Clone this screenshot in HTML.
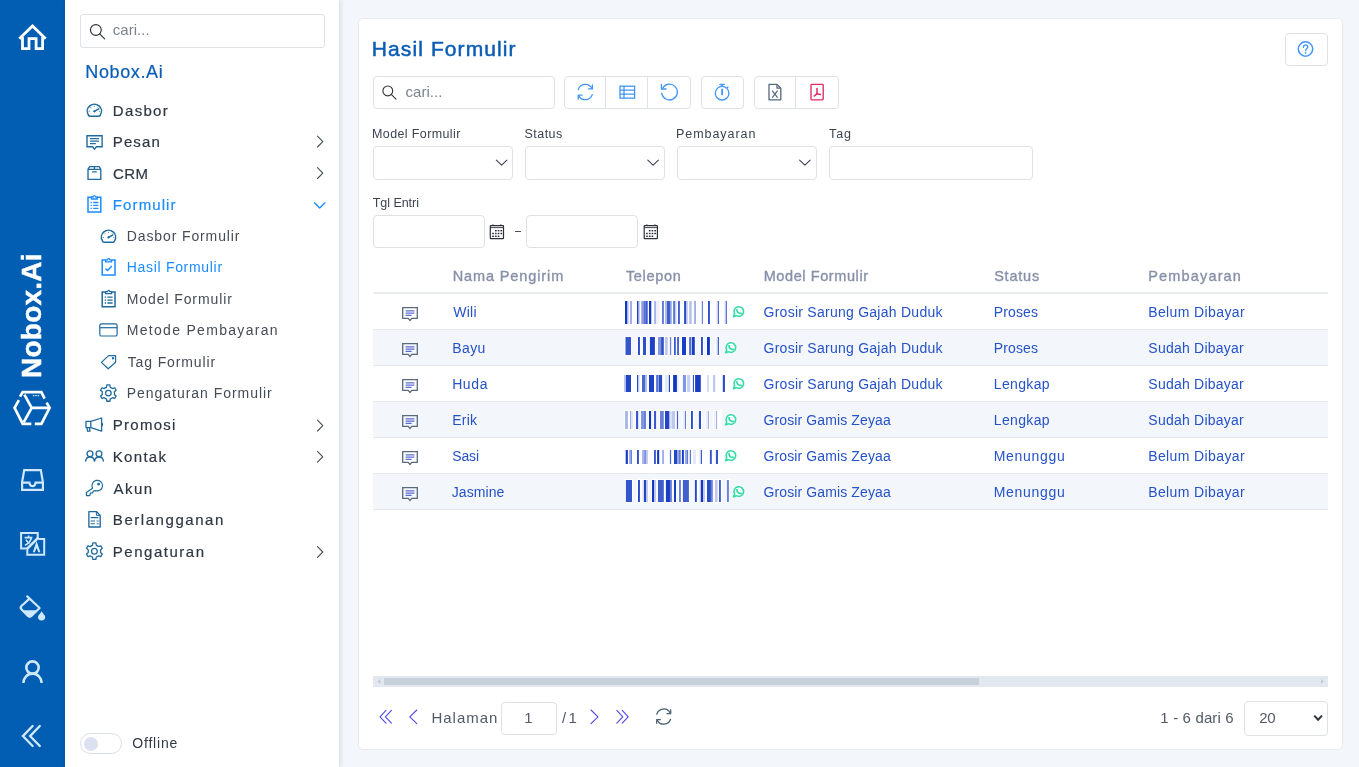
<!DOCTYPE html>
<html lang="id"><head><meta charset="utf-8"><title>Hasil Formulir</title>
<style>
html,body{margin:0;padding:0}
body{width:1359px;height:767px;overflow:hidden;position:relative;background:#f3f6fa;font-family:"Liberation Sans",sans-serif}
.t{position:absolute;white-space:nowrap;display:block}
.abs{position:absolute;box-sizing:border-box}
#rail{left:0;top:0;width:65px;height:767px;background:#015eb2}
#side{left:65px;top:0;width:274px;height:767px;background:#fff;box-shadow:1px 0 5px rgba(40,50,70,.16)}
#card{left:358px;top:18px;width:985px;height:732px;background:#fff;border:1px solid #e6eaef;border-radius:5px}
.box{background:#fff;border:1px solid #dee1e5;border-radius:4px}
.vt{position:absolute;white-space:nowrap;color:#fff;font-weight:bold;transform-origin:0 0;transform:rotate(-90deg)}
.rowbg{left:373px;width:955px;height:35px;background:#f3f6fa}
.hl{left:373px;width:955px;height:1px;background:#e4e8ed}
svg{position:absolute;left:0;top:0}
</style></head><body>
<div class="abs" id="rail"></div>
<div class="abs" id="side"></div>
<div class="abs" id="card"></div>
<!-- sidebar search -->
<div class="abs box" style="left:80px;top:14px;width:245px;height:34px;border-radius:3px"></div>
<!-- toggle -->
<div class="abs" style="left:80px;top:733px;width:42px;height:21px;border:1.5px solid #d9dfe8;border-radius:11px;background:#fff"></div>
<div class="abs" style="left:84px;top:737px;width:14px;height:14px;border-radius:7px;background:#dbe1ee"></div>
<!-- vertical brand -->
<span class="vt" id="vt" style="will-change:transform;-webkit-text-stroke:.4px #fff;left:17.6px;top:378px;font-size:28px;line-height:28px;letter-spacing:0.246px">Nobox.Ai</span>
<!-- main: search + buttons -->
<div class="abs box" style="left:373px;top:76px;width:182px;height:33px"></div>
<div class="abs box" style="left:564px;top:76px;width:127px;height:33px"></div>
<div class="abs" style="left:605px;top:77px;width:1px;height:31px;background:#dee1e5"></div>
<div class="abs" style="left:647px;top:77px;width:1px;height:31px;background:#dee1e5"></div>
<div class="abs box" style="left:701px;top:76px;width:43px;height:33px"></div>
<div class="abs box" style="left:754px;top:76px;width:85px;height:33px"></div>
<div class="abs" style="left:795px;top:77px;width:1px;height:31px;background:#dee1e5"></div>
<div class="abs box" style="left:1285px;top:33px;width:43px;height:33px"></div>
<!-- filters -->
<div class="abs box" style="left:373px;top:146px;width:140px;height:34px"></div>
<div class="abs box" style="left:525px;top:146px;width:140px;height:34px"></div>
<div class="abs box" style="left:677px;top:146px;width:140px;height:34px"></div>
<div class="abs box" style="left:829px;top:146px;width:204px;height:34px"></div>
<div class="abs box" style="left:373px;top:215px;width:112px;height:33px"></div>
<div class="abs box" style="left:526px;top:215px;width:112px;height:33px"></div>
<div class="abs" style="left:515px;top:230.6px;width:5.6px;height:1.3px;background:#4a5058"></div>
<!-- table -->
<div class="abs" style="left:373px;top:292px;width:955px;height:2px;background:#e8ecf1"></div>
<div class="abs rowbg" style="top:330px"></div>
<div class="abs rowbg" style="top:402px"></div>
<div class="abs rowbg" style="top:474px"></div>
<div class="abs hl" style="top:329px"></div>
<div class="abs hl" style="top:365px"></div>
<div class="abs hl" style="top:401px"></div>
<div class="abs hl" style="top:437px"></div>
<div class="abs hl" style="top:473px"></div>
<div class="abs hl" style="top:509px"></div>
<!-- scrollbar -->
<div class="abs" style="left:373px;top:676px;width:955px;height:11px;background:#e3e8f0"></div>
<div class="abs" style="left:384px;top:678px;width:595px;height:7px;background:#c8d0da"></div>
<!-- footer -->
<div class="abs box" style="left:501px;top:702px;width:56px;height:33px"></div>
<div class="abs box" style="left:1244px;top:701px;width:84px;height:35px"></div>
<div id="txt" style="position:absolute;left:0;top:0;width:1359px;height:767px;will-change:transform">
<span class="t" id="t0" style="left:112.75px;top:22px;font-size:15px;line-height:15px;color:#7b848c;letter-spacing:0.021px;">cari...</span>
<span class="t" id="t1" style="left:85.35px;top:63px;font-size:18px;line-height:18px;color:#0a5cb5;letter-spacing:0.622px;-webkit-text-stroke:0.22px #0a5cb5;">Nobox.Ai</span>
<span class="t" id="t2" style="left:112.84px;top:103px;font-size:15px;line-height:15px;color:#2f3742;letter-spacing:1.319px;-webkit-text-stroke:0.2px #2f3742;">Dasbor</span>
<span class="t" id="t3" style="left:112.84px;top:134px;font-size:15px;line-height:15px;color:#2f3742;letter-spacing:1.093px;-webkit-text-stroke:0.2px #2f3742;">Pesan</span>
<span class="t" id="t4" style="left:113.05px;top:166px;font-size:15px;line-height:15px;color:#2f3742;letter-spacing:0.354px;-webkit-text-stroke:0.2px #2f3742;">CRM</span>
<span class="t" id="t5" style="left:112.84px;top:197px;font-size:15px;line-height:15px;color:#1a8cff;letter-spacing:1.104px;-webkit-text-stroke:0.2px #1a8cff;">Formulir</span>
<span class="t" id="t6" style="left:126.75px;top:229px;font-size:14px;line-height:14px;color:#454c56;letter-spacing:0.884px;">Dasbor Formulir</span>
<span class="t" id="t7" style="left:126.75px;top:260px;font-size:14px;line-height:14px;color:#1a8cff;letter-spacing:0.689px;">Hasil Formulir</span>
<span class="t" id="t8" style="left:126.75px;top:292px;font-size:14px;line-height:14px;color:#454c56;letter-spacing:0.906px;">Model Formulir</span>
<span class="t" id="t9" style="left:126.75px;top:323px;font-size:14px;line-height:14px;color:#454c56;letter-spacing:1.306px;">Metode Pembayaran</span>
<span class="t" id="t10" style="left:127.64px;top:355px;font-size:14px;line-height:14px;color:#454c56;letter-spacing:0.888px;">Tag Formulir</span>
<span class="t" id="t11" style="left:126.75px;top:386px;font-size:14px;line-height:14px;color:#454c56;letter-spacing:0.963px;">Pengaturan Formulir</span>
<span class="t" id="t12" style="left:112.84px;top:417px;font-size:15px;line-height:15px;color:#2f3742;letter-spacing:1.254px;-webkit-text-stroke:0.2px #2f3742;">Promosi</span>
<span class="t" id="t13" style="left:112.84px;top:449px;font-size:15px;line-height:15px;color:#2f3742;letter-spacing:1.286px;-webkit-text-stroke:0.2px #2f3742;">Kontak</span>
<span class="t" id="t14" style="left:113.60px;top:481px;font-size:15px;line-height:15px;color:#2f3742;letter-spacing:1.425px;-webkit-text-stroke:0.2px #2f3742;">Akun</span>
<span class="t" id="t15" style="left:112.83px;top:512px;font-size:15px;line-height:15px;color:#2f3742;letter-spacing:1.554px;-webkit-text-stroke:0.2px #2f3742;">Berlangganan</span>
<span class="t" id="t16" style="left:112.84px;top:544px;font-size:15px;line-height:15px;color:#2f3742;letter-spacing:1.518px;-webkit-text-stroke:0.2px #2f3742;">Pengaturan</span>
<span class="t" id="t17" style="left:132.28px;top:736px;font-size:14px;line-height:14px;color:#333a45;letter-spacing:0.798px;">Offline</span>
<span class="t" id="t18" style="left:371.85px;top:38px;font-size:21px;line-height:21px;color:#0a5cb5;letter-spacing:1.090px;-webkit-text-stroke:0.5px #0a5cb5;">Hasil Formulir</span>
<span class="t" id="t19" style="left:405.44px;top:84px;font-size:15px;line-height:15px;color:#7b848c;letter-spacing:0.054px;">cari...</span>
<span class="t" id="t20" style="left:372.05px;top:128px;font-size:12.5px;line-height:13px;color:#3b4350;letter-spacing:0.381px;">Model Formulir</span>
<span class="t" id="t21" style="left:524.43px;top:128px;font-size:12.5px;line-height:13px;color:#3b4350;letter-spacing:0.487px;">Status</span>
<span class="t" id="t22" style="left:676.05px;top:128px;font-size:12.5px;line-height:13px;color:#3b4350;letter-spacing:0.936px;">Pembayaran</span>
<span class="t" id="t23" style="left:829.00px;top:128px;font-size:12.5px;line-height:13px;color:#3b4350;letter-spacing:0.945px;">Tag</span>
<span class="t" id="t24" style="left:372.73px;top:197px;font-size:12.5px;line-height:13px;color:#3b4350;letter-spacing:-0.043px;">Tgl Entri</span>
<span class="t" id="t25" style="left:452.68px;top:269px;font-size:14.5px;line-height:15px;color:#8790a8;letter-spacing:0.885px;-webkit-text-stroke:0.35px #8790a8;">Nama Pengirim</span>
<span class="t" id="t26" style="left:625.88px;top:269px;font-size:14.5px;line-height:15px;color:#8790a8;letter-spacing:0.711px;-webkit-text-stroke:0.35px #8790a8;">Telepon</span>
<span class="t" id="t27" style="left:763.68px;top:269px;font-size:14.5px;line-height:15px;color:#8790a8;letter-spacing:0.591px;-webkit-text-stroke:0.35px #8790a8;">Model Formulir</span>
<span class="t" id="t28" style="left:994.14px;top:269px;font-size:14.5px;line-height:15px;color:#8790a8;letter-spacing:0.798px;-webkit-text-stroke:0.35px #8790a8;">Status</span>
<span class="t" id="t29" style="left:1148.26px;top:269px;font-size:14.5px;line-height:15px;color:#8790a8;letter-spacing:1.161px;-webkit-text-stroke:0.35px #8790a8;">Pembayaran</span>
<span class="t" id="t30" style="left:453.28px;top:305px;font-size:14px;line-height:14px;color:#2552c8;letter-spacing:0.234px;">Wili</span>
<span class="t" id="t31" style="left:763.54px;top:305px;font-size:14px;line-height:14px;color:#2552c8;letter-spacing:0.258px;">Grosir Sarung Gajah Duduk</span>
<span class="t" id="t32" style="left:993.75px;top:305px;font-size:14px;line-height:14px;color:#2552c8;letter-spacing:0.132px;">Proses</span>
<span class="t" id="t33" style="left:1148.22px;top:305px;font-size:14px;line-height:14px;color:#2552c8;letter-spacing:0.388px;">Belum Dibayar</span>
<span class="t" id="t34" style="left:452.15px;top:341px;font-size:14px;line-height:14px;color:#2552c8;letter-spacing:0.451px;">Bayu</span>
<span class="t" id="t35" style="left:763.54px;top:341px;font-size:14px;line-height:14px;color:#2552c8;letter-spacing:0.258px;">Grosir Sarung Gajah Duduk</span>
<span class="t" id="t36" style="left:993.75px;top:341px;font-size:14px;line-height:14px;color:#2552c8;letter-spacing:0.132px;">Proses</span>
<span class="t" id="t37" style="left:1148.32px;top:341px;font-size:14px;line-height:14px;color:#2552c8;letter-spacing:0.230px;">Sudah Dibayar</span>
<span class="t" id="t38" style="left:452.15px;top:377px;font-size:14px;line-height:14px;color:#2552c8;letter-spacing:0.619px;">Huda</span>
<span class="t" id="t39" style="left:763.54px;top:377px;font-size:14px;line-height:14px;color:#2552c8;letter-spacing:0.258px;">Grosir Sarung Gajah Duduk</span>
<span class="t" id="t40" style="left:993.75px;top:377px;font-size:14px;line-height:14px;color:#2552c8;letter-spacing:0.360px;">Lengkap</span>
<span class="t" id="t41" style="left:1148.32px;top:377px;font-size:14px;line-height:14px;color:#2552c8;letter-spacing:0.230px;">Sudah Dibayar</span>
<span class="t" id="t42" style="left:452.15px;top:413px;font-size:14px;line-height:14px;color:#2552c8;letter-spacing:0.290px;">Erik</span>
<span class="t" id="t43" style="left:763.54px;top:413px;font-size:14px;line-height:14px;color:#2552c8;letter-spacing:0.114px;">Grosir Gamis Zeyaa</span>
<span class="t" id="t44" style="left:993.75px;top:413px;font-size:14px;line-height:14px;color:#2552c8;letter-spacing:0.360px;">Lengkap</span>
<span class="t" id="t45" style="left:1148.32px;top:413px;font-size:14px;line-height:14px;color:#2552c8;letter-spacing:0.230px;">Sudah Dibayar</span>
<span class="t" id="t46" style="left:452.32px;top:449px;font-size:14px;line-height:14px;color:#2552c8;letter-spacing:-0.168px;">Sasi</span>
<span class="t" id="t47" style="left:763.54px;top:449px;font-size:14px;line-height:14px;color:#2552c8;letter-spacing:0.114px;">Grosir Gamis Zeyaa</span>
<span class="t" id="t48" style="left:993.75px;top:449px;font-size:14px;line-height:14px;color:#2552c8;letter-spacing:0.709px;">Menunggu</span>
<span class="t" id="t49" style="left:1148.22px;top:449px;font-size:14px;line-height:14px;color:#2552c8;letter-spacing:0.388px;">Belum Dibayar</span>
<span class="t" id="t50" style="left:451.78px;top:485px;font-size:14px;line-height:14px;color:#2552c8;letter-spacing:0.081px;">Jasmine</span>
<span class="t" id="t51" style="left:763.54px;top:485px;font-size:14px;line-height:14px;color:#2552c8;letter-spacing:0.114px;">Grosir Gamis Zeyaa</span>
<span class="t" id="t52" style="left:993.75px;top:485px;font-size:14px;line-height:14px;color:#2552c8;letter-spacing:0.709px;">Menunggu</span>
<span class="t" id="t53" style="left:1148.22px;top:485px;font-size:14px;line-height:14px;color:#2552c8;letter-spacing:0.388px;">Belum Dibayar</span>
<span class="t" id="t54" style="left:431.42px;top:710px;font-size:15px;line-height:15px;color:#515a66;letter-spacing:0.999px;">Halaman</span>
<span class="t" id="t55" style="left:524.32px;top:710px;font-size:15px;line-height:15px;color:#515a66;letter-spacing:0.000px;">1</span>
<span class="t" id="t56" style="left:562.04px;top:710px;font-size:15px;line-height:15px;color:#515a66;letter-spacing:0.000px;">/</span>
<span class="t" id="t57" style="left:568.43px;top:710px;font-size:15px;line-height:15px;color:#515a66;letter-spacing:0.000px;">1</span>
<span class="t" id="t58" style="left:1160.34px;top:710px;font-size:15px;line-height:15px;color:#515a66;letter-spacing:0.147px;">1 - 6 dari 6</span>
<span class="t" id="t59" style="left:1259.13px;top:710px;font-size:15px;line-height:15px;color:#515a66;letter-spacing:-0.141px;">20</span>
</div>
<svg width="1359" height="767" viewBox="0 0 1359 767" fill="none">
<rect x="625.0" y="301" width="2.2" height="23" fill="#1238c2" fill-opacity="1.0"/>
<rect x="627.2" y="301" width="1.6" height="23" fill="#1238c2" fill-opacity="0.25"/>
<rect x="630.0" y="301" width="2.0" height="23" fill="#1238c2" fill-opacity="0.4"/>
<rect x="637.0" y="301" width="1.4" height="23" fill="#1238c2" fill-opacity="0.95"/>
<rect x="638.4" y="301" width="1.5" height="23" fill="#1238c2" fill-opacity="0.25"/>
<rect x="641.2" y="301" width="2.2" height="23" fill="#1238c2" fill-opacity="0.47"/>
<rect x="643.4" y="301" width="1.9" height="23" fill="#1238c2" fill-opacity="0.7"/>
<rect x="645.3" y="301" width="2.4" height="23" fill="#1238c2" fill-opacity="0.82"/>
<rect x="649.0" y="301" width="2.3" height="23" fill="#1238c2" fill-opacity="1.0"/>
<rect x="654.1" y="301" width="1.9" height="23" fill="#1238c2" fill-opacity="0.37"/>
<rect x="656.0" y="301" width="3.2" height="23" fill="#1238c2" fill-opacity="0.07"/>
<rect x="662.1" y="301" width="1.7" height="23" fill="#1238c2" fill-opacity="0.74"/>
<rect x="665.0" y="301" width="1.9" height="23" fill="#1238c2" fill-opacity="0.32"/>
<rect x="666.9" y="301" width="3.3" height="23" fill="#1238c2" fill-opacity="0.8"/>
<rect x="670.2" y="301" width="1.5" height="23" fill="#1238c2" fill-opacity="0.47"/>
<rect x="673.1" y="301" width="1.9" height="23" fill="#1238c2" fill-opacity="0.67"/>
<rect x="675.0" y="301" width="1.4" height="23" fill="#1238c2" fill-opacity="0.25"/>
<rect x="678.1" y="301" width="1.7" height="23" fill="#1238c2" fill-opacity="0.9"/>
<rect x="684.1" y="301" width="1.9" height="23" fill="#1238c2" fill-opacity="0.9"/>
<rect x="686.0" y="301" width="1.7" height="23" fill="#1238c2" fill-opacity="0.3"/>
<rect x="689.1" y="301" width="2.6" height="23" fill="#1238c2" fill-opacity="0.3"/>
<rect x="694.1" y="301" width="1.9" height="23" fill="#1238c2" fill-opacity="0.4"/>
<rect x="701.8" y="301" width="1.2" height="23" fill="#1238c2" fill-opacity="0.63"/>
<rect x="708.0" y="301" width="1.9" height="23" fill="#1238c2" fill-opacity="0.88"/>
<rect x="716.1" y="301" width="1.7" height="23" fill="#1238c2" fill-opacity="0.1"/>
<rect x="717.8" y="301" width="1.2" height="23" fill="#1238c2" fill-opacity="0.76"/>
<rect x="724.3" y="301" width="1.4" height="23" fill="#1238c2" fill-opacity="0.1"/>
<rect x="725.7" y="301" width="1.2" height="23" fill="#1238c2" fill-opacity="0.76"/>
<rect x="624.5" y="336" width="7.5" height="20" fill="#fff"/>
<rect x="637.0" y="336" width="3.9" height="20" fill="#fff"/>
<rect x="642.0" y="336" width="5.0" height="20" fill="#fff"/>
<rect x="648.9" y="336" width="7.0" height="20" fill="#fff"/>
<rect x="657.0" y="336" width="5.1" height="20" fill="#fff"/>
<rect x="660.1" y="336" width="4.7" height="20" fill="#fff"/>
<rect x="664.0" y="336" width="4.8" height="20" fill="#fff"/>
<rect x="668.9" y="336" width="3.3" height="20" fill="#fff"/>
<rect x="673.0" y="336" width="3.8" height="20" fill="#fff"/>
<rect x="676.1" y="336" width="3.9" height="20" fill="#fff"/>
<rect x="681.0" y="336" width="6.0" height="20" fill="#fff"/>
<rect x="688.1" y="336" width="4.2" height="20" fill="#fff"/>
<rect x="690.9" y="336" width="4.9" height="20" fill="#fff"/>
<rect x="700.0" y="336" width="3.9" height="20" fill="#fff"/>
<rect x="706.0" y="336" width="4.9" height="20" fill="#fff"/>
<rect x="715.1" y="336" width="3.7" height="20" fill="#fff"/>
<rect x="716.8" y="336" width="3.2" height="20" fill="#fff"/>
<rect x="625.5" y="337" width="5.5" height="18" fill="#1238c2" fill-opacity="0.85"/>
<rect x="638.0" y="337" width="1.9" height="18" fill="#1238c2" fill-opacity="0.93"/>
<rect x="643.0" y="337" width="3.0" height="18" fill="#1238c2" fill-opacity="0.88"/>
<rect x="649.9" y="337" width="5.0" height="18" fill="#1238c2" fill-opacity="0.95"/>
<rect x="658.0" y="337" width="3.1" height="18" fill="#1238c2" fill-opacity="0.53"/>
<rect x="661.1" y="337" width="2.7" height="18" fill="#1238c2" fill-opacity="0.88"/>
<rect x="665.0" y="337" width="2.8" height="18" fill="#1238c2" fill-opacity="0.28"/>
<rect x="669.9" y="337" width="1.3" height="18" fill="#1238c2" fill-opacity="0.63"/>
<rect x="674.0" y="337" width="1.8" height="18" fill="#1238c2" fill-opacity="0.83"/>
<rect x="677.1" y="337" width="1.9" height="18" fill="#1238c2" fill-opacity="0.79"/>
<rect x="682.0" y="337" width="4.0" height="18" fill="#1238c2" fill-opacity="0.97"/>
<rect x="689.1" y="337" width="2.2" height="18" fill="#1238c2" fill-opacity="0.74"/>
<rect x="691.9" y="337" width="2.9" height="18" fill="#1238c2" fill-opacity="0.97"/>
<rect x="701.0" y="337" width="1.9" height="18" fill="#1238c2" fill-opacity="0.9"/>
<rect x="707.0" y="337" width="2.9" height="18" fill="#1238c2" fill-opacity="1.0"/>
<rect x="716.1" y="337" width="1.7" height="18" fill="#1238c2" fill-opacity="0.13"/>
<rect x="717.8" y="337" width="1.2" height="18" fill="#1238c2" fill-opacity="0.8"/>
<rect x="624.0" y="375" width="1.9" height="17" fill="#1238c2" fill-opacity="0.28"/>
<rect x="625.9" y="375" width="5.1" height="17" fill="#1238c2" fill-opacity="0.93"/>
<rect x="637.0" y="375" width="1.2" height="17" fill="#1238c2" fill-opacity="0.93"/>
<rect x="638.2" y="375" width="1.7" height="17" fill="#1238c2" fill-opacity="0.12"/>
<rect x="642.0" y="375" width="3.1" height="17" fill="#1238c2" fill-opacity="0.76"/>
<rect x="645.1" y="375" width="1.9" height="17" fill="#1238c2" fill-opacity="0.32"/>
<rect x="649.0" y="375" width="5.0" height="17" fill="#1238c2" fill-opacity="0.95"/>
<rect x="656.1" y="375" width="1.9" height="17" fill="#1238c2" fill-opacity="0.7"/>
<rect x="658.0" y="375" width="1.0" height="17" fill="#1238c2" fill-opacity="0.48"/>
<rect x="659.0" y="375" width="3.1" height="17" fill="#1238c2" fill-opacity="0.9"/>
<rect x="665.0" y="375" width="2.8" height="17" fill="#1238c2" fill-opacity="0.12"/>
<rect x="668.8" y="375" width="1.2" height="17" fill="#1238c2" fill-opacity="0.93"/>
<rect x="673.1" y="375" width="3.8" height="17" fill="#1238c2" fill-opacity="1.0"/>
<rect x="676.9" y="375" width="1.9" height="17" fill="#1238c2" fill-opacity="0.08"/>
<rect x="682.9" y="375" width="3.1" height="17" fill="#1238c2" fill-opacity="0.53"/>
<rect x="687.0" y="375" width="3.3" height="17" fill="#1238c2" fill-opacity="0.23"/>
<rect x="692.9" y="375" width="1.0" height="17" fill="#1238c2" fill-opacity="0.97"/>
<rect x="695.1" y="375" width="5.7" height="17" fill="#1238c2" fill-opacity="0.97"/>
<rect x="707.0" y="375" width="2.0" height="17" fill="#1238c2" fill-opacity="0.17"/>
<rect x="713.0" y="375" width="2.2" height="17" fill="#1238c2" fill-opacity="0.27"/>
<rect x="722.8" y="375" width="2.2" height="17" fill="#1238c2" fill-opacity="0.88"/>
<rect x="624.0" y="410" width="4.9" height="20" fill="#fff"/>
<rect x="629.0" y="410" width="3.0" height="20" fill="#fff"/>
<rect x="630.0" y="410" width="3.9" height="20" fill="#fff"/>
<rect x="635.0" y="410" width="4.2" height="20" fill="#fff"/>
<rect x="640.0" y="410" width="4.4" height="20" fill="#fff"/>
<rect x="642.4" y="410" width="4.6" height="20" fill="#fff"/>
<rect x="648.0" y="410" width="4.1" height="20" fill="#fff"/>
<rect x="653.0" y="410" width="4.1" height="20" fill="#fff"/>
<rect x="659.0" y="410" width="5.8" height="20" fill="#fff"/>
<rect x="664.0" y="410" width="6.3" height="20" fill="#fff"/>
<rect x="668.3" y="410" width="4.8" height="20" fill="#fff"/>
<rect x="671.1" y="410" width="4.9" height="20" fill="#fff"/>
<rect x="675.9" y="410" width="3.2" height="20" fill="#fff"/>
<rect x="682.0" y="410" width="3.3" height="20" fill="#fff"/>
<rect x="683.9" y="410" width="3.1" height="20" fill="#fff"/>
<rect x="690.0" y="410" width="3.9" height="20" fill="#fff"/>
<rect x="697.9" y="410" width="4.1" height="20" fill="#fff"/>
<rect x="704.9" y="410" width="3.3" height="20" fill="#fff"/>
<rect x="706.8" y="410" width="3.2" height="20" fill="#fff"/>
<rect x="712.9" y="410" width="3.4" height="20" fill="#fff"/>
<rect x="715.0" y="410" width="3.1" height="20" fill="#fff"/>
<rect x="718.0" y="410" width="3.9" height="20" fill="#fff"/>
<rect x="625.0" y="411" width="2.9" height="18" fill="#1238c2" fill-opacity="0.36"/>
<rect x="630.0" y="411" width="1.0" height="18" fill="#1238c2" fill-opacity="0.4"/>
<rect x="631.0" y="411" width="1.9" height="18" fill="#1238c2" fill-opacity="0.13"/>
<rect x="636.0" y="411" width="2.2" height="18" fill="#1238c2" fill-opacity="0.83"/>
<rect x="641.0" y="411" width="2.4" height="18" fill="#1238c2" fill-opacity="0.53"/>
<rect x="643.4" y="411" width="2.6" height="18" fill="#1238c2" fill-opacity="0.63"/>
<rect x="649.0" y="411" width="2.1" height="18" fill="#1238c2" fill-opacity="1.0"/>
<rect x="654.0" y="411" width="2.1" height="18" fill="#1238c2" fill-opacity="0.83"/>
<rect x="660.0" y="411" width="3.8" height="18" fill="#1238c2" fill-opacity="0.63"/>
<rect x="665.0" y="411" width="4.3" height="18" fill="#1238c2" fill-opacity="0.93"/>
<rect x="669.3" y="411" width="2.8" height="18" fill="#1238c2" fill-opacity="0.15"/>
<rect x="672.1" y="411" width="2.9" height="18" fill="#1238c2" fill-opacity="0.27"/>
<rect x="676.9" y="411" width="1.2" height="18" fill="#1238c2" fill-opacity="0.8"/>
<rect x="683.0" y="411" width="1.3" height="18" fill="#1238c2" fill-opacity="0.1"/>
<rect x="684.9" y="411" width="1.1" height="18" fill="#1238c2" fill-opacity="0.67"/>
<rect x="691.0" y="411" width="1.9" height="18" fill="#1238c2" fill-opacity="0.9"/>
<rect x="698.9" y="411" width="2.1" height="18" fill="#1238c2" fill-opacity="0.9"/>
<rect x="705.9" y="411" width="1.3" height="18" fill="#1238c2" fill-opacity="0.1"/>
<rect x="707.8" y="411" width="1.2" height="18" fill="#1238c2" fill-opacity="0.4"/>
<rect x="713.9" y="411" width="1.4" height="18" fill="#1238c2" fill-opacity="0.1"/>
<rect x="716.0" y="411" width="1.1" height="18" fill="#1238c2" fill-opacity="0.4"/>
<rect x="719.0" y="411" width="1.9" height="18" fill="#fff"/>
<rect x="625.7" y="450" width="2.2" height="14" fill="#1238c2" fill-opacity="0.97"/>
<rect x="629.1" y="450" width="1.4" height="14" fill="#1238c2" fill-opacity="0.4"/>
<rect x="630.5" y="450" width="1.5" height="14" fill="#1238c2" fill-opacity="0.63"/>
<rect x="637.0" y="450" width="1.9" height="14" fill="#1238c2" fill-opacity="0.88"/>
<rect x="642.0" y="450" width="1.9" height="14" fill="#1238c2" fill-opacity="0.37"/>
<rect x="643.9" y="450" width="1.1" height="14" fill="#1238c2" fill-opacity="0.48"/>
<rect x="645.0" y="450" width="1.0" height="14" fill="#1238c2" fill-opacity="0.56"/>
<rect x="646.0" y="450" width="1.9" height="14" fill="#1238c2" fill-opacity="0.27"/>
<rect x="654.0" y="450" width="1.9" height="14" fill="#1238c2" fill-opacity="0.83"/>
<rect x="657.1" y="450" width="2.1" height="14" fill="#1238c2" fill-opacity="1.0"/>
<rect x="662.1" y="450" width="1.9" height="14" fill="#1238c2" fill-opacity="0.4"/>
<rect x="669.9" y="450" width="1.2" height="14" fill="#1238c2" fill-opacity="0.76"/>
<rect x="674.0" y="450" width="3.1" height="14" fill="#1238c2" fill-opacity="0.93"/>
<rect x="677.1" y="450" width="1.7" height="14" fill="#1238c2" fill-opacity="0.43"/>
<rect x="678.8" y="450" width="1.9" height="14" fill="#1238c2" fill-opacity="0.67"/>
<rect x="681.9" y="450" width="2.0" height="14" fill="#1238c2" fill-opacity="0.97"/>
<rect x="685.0" y="450" width="1.8" height="14" fill="#1238c2" fill-opacity="0.43"/>
<rect x="686.8" y="450" width="1.3" height="14" fill="#1238c2" fill-opacity="0.67"/>
<rect x="689.8" y="450" width="1.2" height="14" fill="#1238c2" fill-opacity="0.7"/>
<rect x="692.9" y="450" width="3.1" height="14" fill="#1238c2" fill-opacity="0.11"/>
<rect x="698.9" y="450" width="1.4" height="14" fill="#1238c2" fill-opacity="0.08"/>
<rect x="700.8" y="450" width="1.2" height="14" fill="#1238c2" fill-opacity="0.83"/>
<rect x="709.9" y="450" width="1.9" height="14" fill="#1238c2" fill-opacity="0.85"/>
<rect x="715.9" y="450" width="2.1" height="14" fill="#1238c2" fill-opacity="0.85"/>
<rect x="624.9" y="479" width="8.1" height="24" fill="#fff"/>
<rect x="637.0" y="479" width="3.9" height="24" fill="#fff"/>
<rect x="641.2" y="479" width="3.7" height="24" fill="#fff"/>
<rect x="642.9" y="479" width="4.1" height="24" fill="#fff"/>
<rect x="645.0" y="479" width="3.9" height="24" fill="#fff"/>
<rect x="651.0" y="479" width="4.0" height="24" fill="#fff"/>
<rect x="653.0" y="479" width="4.1" height="24" fill="#fff"/>
<rect x="657.0" y="479" width="7.8" height="24" fill="#fff"/>
<rect x="664.9" y="479" width="6.1" height="24" fill="#fff"/>
<rect x="669.0" y="479" width="3.9" height="24" fill="#fff"/>
<rect x="673.0" y="479" width="4.0" height="24" fill="#fff"/>
<rect x="678.0" y="479" width="3.9" height="24" fill="#fff"/>
<rect x="681.9" y="479" width="8.0" height="24" fill="#fff"/>
<rect x="693.9" y="479" width="3.9" height="24" fill="#fff"/>
<rect x="697.9" y="479" width="3.9" height="24" fill="#fff"/>
<rect x="699.8" y="479" width="4.2" height="24" fill="#fff"/>
<rect x="702.0" y="479" width="3.9" height="24" fill="#fff"/>
<rect x="706.0" y="479" width="5.9" height="24" fill="#fff"/>
<rect x="709.9" y="479" width="3.9" height="24" fill="#fff"/>
<rect x="714.0" y="479" width="4.6" height="24" fill="#fff"/>
<rect x="718.0" y="479" width="3.9" height="24" fill="#fff"/>
<rect x="725.9" y="479" width="4.0" height="24" fill="#fff"/>
<rect x="625.9" y="480" width="6.1" height="22" fill="#1238c2" fill-opacity="0.85"/>
<rect x="638.0" y="480" width="1.9" height="22" fill="#1238c2" fill-opacity="0.93"/>
<rect x="642.2" y="480" width="1.7" height="22" fill="#1238c2" fill-opacity="0.1"/>
<rect x="643.9" y="480" width="2.1" height="22" fill="#1238c2" fill-opacity="0.93"/>
<rect x="646.0" y="480" width="1.9" height="22" fill="#1238c2" fill-opacity="0.28"/>
<rect x="652.0" y="480" width="2.0" height="22" fill="#1238c2" fill-opacity="1.0"/>
<rect x="654.0" y="480" width="2.1" height="22" fill="#1238c2" fill-opacity="0.28"/>
<rect x="658.0" y="480" width="5.8" height="22" fill="#1238c2" fill-opacity="0.82"/>
<rect x="665.9" y="480" width="4.1" height="22" fill="#1238c2" fill-opacity="0.96"/>
<rect x="670.0" y="480" width="1.9" height="22" fill="#1238c2" fill-opacity="0.63"/>
<rect x="674.0" y="480" width="2.0" height="22" fill="#1238c2" fill-opacity="0.97"/>
<rect x="679.0" y="480" width="1.9" height="22" fill="#1238c2" fill-opacity="0.63"/>
<rect x="682.9" y="480" width="6.0" height="22" fill="#1238c2" fill-opacity="0.8"/>
<rect x="694.9" y="480" width="1.9" height="22" fill="#1238c2" fill-opacity="0.93"/>
<rect x="698.9" y="480" width="1.9" height="22" fill="#1238c2" fill-opacity="0.1"/>
<rect x="700.8" y="480" width="2.2" height="22" fill="#1238c2" fill-opacity="1.0"/>
<rect x="703.0" y="480" width="1.9" height="22" fill="#1238c2" fill-opacity="0.28"/>
<rect x="707.0" y="480" width="3.9" height="22" fill="#1238c2" fill-opacity="0.9"/>
<rect x="710.9" y="480" width="1.9" height="22" fill="#1238c2" fill-opacity="0.63"/>
<rect x="715.0" y="480" width="2.6" height="22" fill="#1238c2" fill-opacity="0.27"/>
<rect x="719.0" y="480" width="1.9" height="22" fill="#1238c2" fill-opacity="0.79"/>
<rect x="726.9" y="480" width="2.0" height="22" fill="#1238c2" fill-opacity="0.63"/>
<g stroke="#ffffff" stroke-width="2.8" fill="none" stroke-linejoin="miter"><path d="M19.3,38.8 L32.5,26 L45.7,38.8"/><path d="M22.5,37 V48.6 H29 V38.7 H36.1 V48.6 H42.6 V37"/></g>
<g stroke="#ffffff" stroke-width="2.7" fill="none" stroke-linejoin="miter" stroke-linecap="butt"><path d="M20,396.6 L22.7,392.1 H41.4 L44.6,398.6"/><path d="M46.6,402.6 L49.6,407.8 L41.4,423.8 H34.8"/><path d="M31.3,423.8 H22.7 L14.6,407.8 L18.9,400.2"/><path d="M24.4,394.6 L31.7,407.8 H49.4 M31.7,407.8 L23.6,422.4"/></g>
<path d="M32.8,395.7 H39.9" stroke="#ffffff" stroke-width="1" stroke-dasharray="1.6 0.8"/>
<g stroke="#cfe8ff" stroke-width="2.2" fill="none" stroke-linejoin="miter"><path d="M24.2,470.1 H40.8 L42.9,482 V489.9 H22.1 V482 Z"/><path d="M22.1,482.6 H29.4 C29.8,485.4 31,486.2 32.5,486.2 C34,486.2 35.2,485.4 35.6,482.6 H42.9"/></g>
<g stroke="#cfe8ff" stroke-width="2" fill="none" stroke-linejoin="miter"><path d="M37.7,538.6 V533 H21.1 V548.6 H26.6"/><path d="M27.3,549.4 V554.8 H44.2 V538.9 H38.4"/><path d="M38.6,537.4 L26.6,549.2" stroke-width="2.6"/><path d="M24.6,537.6 H32.4 M28.6,535.6 V537.6 M31.3,538 C30.6,541 28.5,543.6 25,545.2 M26,539.6 C26.8,541.4 28.2,542.6 29.6,543.2" stroke-width="1.6"/></g>
<path d="M36.6,541 L40.4,552.2 H38.4 L36.6,548 L34.8,552.2 H32.8 Z" fill="#cfe8ff"/>
<g stroke="#cfe8ff" stroke-width="2.2" fill="none" stroke-linejoin="round" stroke-linecap="round"><path d="M27.2,596.4 L39.6,608 L31.4,616 Q29.7,617.6 28,616 L21.4,609.2 Q19.9,607.6 21.4,606 L29.6,598.6"/></g>
<path d="M22.3,610.2 H37.4 L31.4,616 Q29.7,617.6 28,616 Z" fill="#cfe8ff"/>
<path d="M41.6,611.2 C43,613.6 45.2,615.4 45.2,617 A3.6,3.4 0 0 1 38,617 C38,615.4 40.2,613.6 41.6,611.2 Z" fill="#cfe8ff"/>
<g stroke="#cfe8ff" stroke-width="2.6" fill="none"><circle cx="32.5" cy="667.6" r="6.2"/><path d="M23.4,683 A9.1,9.4 0 0 1 41.6,683"/></g>
<g stroke="#cfe8ff" stroke-width="2.3" fill="none" stroke-linecap="round" stroke-linejoin="miter"><path d="M32.6,726 L22.9,736.1 L32.6,746"/><path d="M39.8,726 L30.1,736.1 L39.8,746"/></g>
<g stroke="#2c3138" stroke-width="1.15" fill="none" stroke-linecap="round"><circle cx="95.85" cy="30.0" r="5.4"/><path d="M99.66834,33.81834 l5.0,5.0"/></g>
<g stroke="#2c3138" stroke-width="1.1" fill="none" stroke-linecap="round"><circle cx="387.8" cy="90.95" r="4.9"/><path d="M391.26479,94.41479 l4.7,4.7"/></g>
<path d="M317.5,136.2 l5.3,5.4 l-5.3,5.4" stroke="#4b5157" stroke-width="1.15" fill="none" stroke-linecap="round" stroke-linejoin="round"/>
<path d="M317.5,167.7 l5.3,5.4 l-5.3,5.4" stroke="#4b5157" stroke-width="1.15" fill="none" stroke-linecap="round" stroke-linejoin="round"/>
<path d="M317.5,420.2 l5.3,5.4 l-5.3,5.4" stroke="#4b5157" stroke-width="1.15" fill="none" stroke-linecap="round" stroke-linejoin="round"/>
<path d="M317.5,451.4 l5.3,5.4 l-5.3,5.4" stroke="#4b5157" stroke-width="1.15" fill="none" stroke-linecap="round" stroke-linejoin="round"/>
<path d="M317.5,546.6 l5.3,5.4 l-5.3,5.4" stroke="#4b5157" stroke-width="1.15" fill="none" stroke-linecap="round" stroke-linejoin="round"/>
<path d="M314.5,202.8 l5.2,5.2 l5.2,-5.2" stroke="#1a8cff" stroke-width="1.3" fill="none" stroke-linecap="round" stroke-linejoin="round"/>
<g stroke="#1f6a9e" stroke-width="1.5" fill="none" stroke-linecap="round" stroke-linejoin="round"><path d="M88.20,114.55 A7.15,6.85 0 1 1 100.50,114.55 Q100.10,116.15 98.70,116.15 H90.00 Q88.60,116.15 88.20,114.55 Z"/><path d="M94.35,111.35 L98.75,108.85" stroke-width="1.5"/></g><circle cx="94.35" cy="111.35" r="1.15" fill="#1f6a9e"/><g fill="#1f6a9e" fill-opacity=".75"><circle cx="89.15" cy="111.35" r=".6"/><circle cx="99.55" cy="111.35" r=".6"/><circle cx="94.35" cy="106.15" r=".6"/><circle cx="90.75" cy="107.65" r=".55"/><circle cx="97.95" cy="107.45" r=".4"/></g>
<g stroke="#1f6a9e" stroke-width="1.5" fill="none" stroke-linecap="round" stroke-linejoin="round"><path d="M102.35,240.65 A7.15,6.85 0 1 1 114.65,240.65 Q114.25,242.25 112.85,242.25 H104.15 Q102.75,242.25 102.35,240.65 Z"/><path d="M108.50,237.45 L112.90,234.95" stroke-width="1.5"/></g><circle cx="108.50" cy="237.45" r="1.15" fill="#1f6a9e"/><g fill="#1f6a9e" fill-opacity=".75"><circle cx="103.30" cy="237.45" r=".6"/><circle cx="113.70" cy="237.45" r=".6"/><circle cx="108.50" cy="232.25" r=".6"/><circle cx="104.90" cy="233.75" r=".55"/><circle cx="112.10" cy="233.55" r=".4"/></g>
<g stroke="#1f6a9e" stroke-width="1.2" fill="none" stroke-linejoin="miter"><path d="M87,135.7 H102.1 V146.8 H96.4 L94.5,149.1 L92.6,146.8 H87 Z" stroke-width="1.4"/><path d="M90,138.7 H99 M90,141.2 H99 M90,143.7 H95.8" stroke-width="1.25"/></g>
<g stroke="#1f6a9e" stroke-width="1.35" fill="none" stroke-linejoin="round"><path d="M88,169.3 L89.6,166.6 H99.2 L100.8,169.3 V179.4 H88 Z"/><path d="M88,169.3 H100.8 M94.4,166.6 V169.3 M92.2,171.8 H96.8"/></g>
<g stroke="#1a8cff" stroke-width="1.5" fill="none" stroke-linejoin="miter"><path d="M91.2,197.20000000000002 H88.0 V212.0 H100.8 V197.20000000000002 H97.60000000000001"/><path d="M91.4,199.0 V197.0 H93.10000000000001 Q94.4,194.20000000000002 95.7,197.0 H97.4 V199.0 Z" stroke-width="1.3" stroke-linejoin="round"/><path d="M90.5,202.5 h1.3 M93.2,202.5 h5.2 M90.5,205.4 h1.3 M93.2,205.4 h5.2 M90.5,208.3 h1.3 M93.2,208.3 h5.2" stroke-width="1.3"/></g>
<g stroke="#1a8cff" stroke-width="1.5" fill="none" stroke-linejoin="miter"><path d="M105.4,260.09999999999997 H102.2 V274.9 H115.0 V260.09999999999997 H111.80000000000001"/><path d="M105.60000000000001,261.9 V259.9 H107.30000000000001 Q108.60000000000001,257.09999999999997 109.9,259.9 H111.60000000000001 V261.9 Z" stroke-width="1.3" stroke-linejoin="round"/><path d="M105.4,268.4 l2.2,2.2 l4.3,-4.6" stroke-width="1.4"/></g>
<g stroke="#1f6a9e" stroke-width="1.5" fill="none" stroke-linejoin="miter"><path d="M105.4,291.9 H102.2 V306.7 H115.0 V291.9 H111.80000000000001"/><path d="M105.60000000000001,293.7 V291.7 H107.30000000000001 Q108.60000000000001,288.9 109.9,291.7 H111.60000000000001 V293.7 Z" stroke-width="1.3" stroke-linejoin="round"/><path d="M104.7,297.2 h1.3 M107.4,297.2 h5.2 M104.7,300.1 h1.3 M107.4,300.1 h5.2 M104.7,303 h1.3 M107.4,303 h5.2" stroke-width="1.3"/></g>
<g stroke="#1f6a9e" stroke-width="1.2" fill="none"><rect x="99.8" y="323.9" width="17.3" height="12.1" rx="1.6"/><path d="M99.8,327.7 H117.1"/></g>
<g stroke="#1f6a9e" stroke-width="1.2" fill="none" stroke-linejoin="round"><path d="M108.6,355.6 H115.6 V362.2 L108.2,368.8 L101.4,362.4 Z"/><circle cx="113" cy="358.3" r=".6" fill="#1f6a9e"/></g>
<g stroke="#1f6a9e" stroke-width="1.3" fill="none" stroke-linejoin="round"><path d="M106.45,387.26 L106.88,384.93 L109.82,384.93 L110.25,387.26 A6.14,6.14 0 0 1 112.46,388.54 L112.46,388.54 L114.69,387.74 L116.16,390.29 L114.36,391.82 A6.14,6.14 0 0 1 114.36,394.38 L114.36,394.38 L116.16,395.91 L114.69,398.46 L112.46,397.66 A6.14,6.14 0 0 1 110.25,398.94 L110.25,398.94 L109.82,401.27 L106.88,401.27 L106.45,398.94 A6.14,6.14 0 0 1 104.24,397.66 L104.24,397.66 L102.01,398.46 L100.54,395.91 L102.34,394.38 A6.14,6.14 0 0 1 102.34,391.82 L102.34,391.82 L100.54,390.29 L102.01,387.74 L104.24,388.54 A6.14,6.14 0 0 1 106.45,387.26 Z"/><circle cx="108.35" cy="393.1" r="2.82"/></g>
<g stroke="#1f6a9e" stroke-width="1.3" fill="none" stroke-linejoin="round"><path d="M92.48,545.29 L92.91,542.93 L95.89,542.93 L96.32,545.29 A6.22,6.22 0 0 1 98.56,546.58 L98.56,546.58 L100.82,545.78 L102.30,548.35 L100.48,549.91 A6.22,6.22 0 0 1 100.48,552.49 L100.48,552.49 L102.30,554.05 L100.82,556.62 L98.56,555.82 A6.22,6.22 0 0 1 96.32,557.11 L96.32,557.11 L95.89,559.47 L92.91,559.47 L92.48,557.11 A6.22,6.22 0 0 1 90.24,555.82 L90.24,555.82 L87.98,556.62 L86.50,554.05 L88.32,552.49 A6.22,6.22 0 0 1 88.32,549.91 L88.32,549.91 L86.50,548.35 L87.98,545.78 L90.24,546.58 A6.22,6.22 0 0 1 92.48,545.29 Z"/><circle cx="94.4" cy="551.2" r="2.86"/></g>
<g stroke="#1f6a9e" stroke-width="1.3" fill="none" stroke-linejoin="round"><path d="M86,421.4 H90.8 L101.6,418 V431.2 L90.8,427.6 H86 Z"/><path d="M87,427.6 L87.6,431.2 H90 L89.4,427.6"/><path d="M101.6,423 Q103.4,424.6 101.6,426.2"/><path d="M90.8,421.4 V427.6"/></g>
<g stroke="#1f6a9e" stroke-width="1.3" fill="none"><circle cx="90" cy="453.8" r="2.9"/><circle cx="99" cy="453.8" r="2.9"/><path d="M85.5,461.6 C85.8,458.6 87.6,457 90,457 C92.4,457 94.2,458.6 94.5,461.6 C94.8,458.6 96.6,457 99,457 C101.4,457 103.2,458.6 103.5,461.6"/></g>
<g stroke="#1f6a9e" stroke-width="1.2" fill="none" stroke-linejoin="round"><path d="M92.6,488.2 A5.3,5.3 0 1 1 95.4,490.6 L93.2,491 L92.6,493 L90.4,493.2 L89.8,495.6 H86.4 V492.6 Z"/><circle cx="98.6" cy="484.2" r=".8" fill="#1f6a9e"/></g>
<g stroke="#1f6a9e" stroke-width="1.35" fill="none" stroke-linejoin="round"><path d="M88.9,511.6 H96.4 L100.2,515.4 V527 H88.9 Z"/><path d="M96.4,511.6 V515.4 H100.2" stroke-width="1"/><path d="M90.8,517.6 H98.4 M90.6,521 H94.9 M96.6,521 H98.6 M90.6,523.7 H94.9 M96.6,523.7 H98.6" stroke-width="1.15"/></g>
<g stroke="#4096f7" stroke-width="1.3" fill="none" stroke-linecap="round" stroke-linejoin="round"><path d="M578.28,89.59 A7.3,7.3 0 0 1 591.80,88.29"/><path d="M592.24,94.66 A7.3,7.3 0 0 1 578.98,96.05"/><path d="M592.40,85.00 V88.90 H588.50"/><path d="M578.20,99.00 V95.10 H582.10"/></g>
<g stroke="#4096f7" stroke-width="1.3" fill="none"><rect x="620" y="86.2" width="14.6" height="11.9"/><path d="M620,90.2 H634.6 M620,94.2 H634.6 M624,86.2 V98.1"/></g>
<g stroke="#4096f7" stroke-width="1.3" fill="none" stroke-linecap="round" stroke-linejoin="round"><path d="M662.6,88.2 A7.9,7.9 0 1 1 661.7,93.2"/><path d="M661.4,84.4 V89 H666"/></g>
<g stroke="#4096f7" stroke-width="1.3" fill="none" stroke-linecap="round"><circle cx="722.1" cy="93.2" r="6.8"/><path d="M720,84.5 H724.2 M722.1,84.5 V86.4 M727.2,87.6 L728,86.9"/><path d="M722.1,89.4 V94.4" stroke-width="1.8"/></g>
<g stroke="#56697f" stroke-width="1.3" fill="none" stroke-linejoin="round"><path d="M769,84.4 H777 L780.8,88.2 V99.8 H769 Z"/><path d="M777,84.4 V88.2 H780.8"/><path d="M772.2,90.6 L777.6,97.6 M777.6,90.6 L772.2,97.6" stroke-width="1.2"/></g>
<g stroke="#dc2c66" stroke-width="1.35" fill="none" stroke-linejoin="round"><rect x="811" y="84.4" width="12.2" height="15.4" rx=".8"/></g>
<g stroke="#dc2c66" fill="none" stroke-linecap="round"><path d="M817,88.6 V93.6" stroke-width="1.5"/><path d="M817,93.8 L814.3,96" stroke-width="1.6"/><path d="M817,93.8 L820.3,94.6" stroke-width="1.5"/></g>
<g stroke="#4096f7" stroke-width="1.5" fill="none" stroke-linecap="round"><circle cx="1305.5" cy="49" r="7.2"/><path d="M1303.4,47.2 C1303.4,44.4 1307.8,44.4 1307.8,47 C1307.8,48.6 1305.6,48.8 1305.6,50.6" stroke-width="1.4"/></g><circle cx="1305.6" cy="52.9" r=".9" fill="#4096f7"/>
<path d="M496.3,160.2 l5.3,5 l5.3,-5" stroke="#3b4350" stroke-width="1.1" fill="none" stroke-linecap="round" stroke-linejoin="round"/>
<path d="M647.8,160.2 l5.3,5 l5.3,-5" stroke="#3b4350" stroke-width="1.1" fill="none" stroke-linecap="round" stroke-linejoin="round"/>
<path d="M799.6,160.2 l5.3,5 l5.3,-5" stroke="#3b4350" stroke-width="1.1" fill="none" stroke-linecap="round" stroke-linejoin="round"/>
<g stroke="#2b313a" fill="none"><rect x="490.3" y="225.60000000000002" width="13.2" height="13" rx=".6" stroke-width="1.2"/><path d="M490.3,227.60000000000002 H503.5" stroke-width=".9"/><path d="M492.90000000000003,224.4 v1.6 M500.90000000000003,224.4 v1.6" stroke-width="1.4"/></g><rect x="494.95" y="230.00" width="1.7" height="1.4" fill="#2b313a"/><rect x="497.70" y="230.00" width="1.7" height="1.4" fill="#2b313a"/><rect x="500.45" y="230.00" width="1.7" height="1.4" fill="#2b313a"/><rect x="492.20" y="232.80" width="1.7" height="1.4" fill="#2b313a"/><rect x="494.95" y="232.80" width="1.7" height="1.4" fill="#2b313a"/><rect x="497.70" y="232.80" width="1.7" height="1.4" fill="#2b313a"/><rect x="500.45" y="232.80" width="1.7" height="1.4" fill="#2b313a"/><rect x="492.20" y="235.60" width="1.7" height="1.4" fill="#2b313a"/><rect x="494.95" y="235.60" width="1.7" height="1.4" fill="#2b313a"/><rect x="497.70" y="235.60" width="1.7" height="1.4" fill="#2b313a"/>
<g stroke="#2b313a" fill="none"><rect x="644.2" y="225.60000000000002" width="13.2" height="13" rx=".6" stroke-width="1.2"/><path d="M644.2,227.60000000000002 H657.4" stroke-width=".9"/><path d="M646.8,224.4 v1.6 M654.8,224.4 v1.6" stroke-width="1.4"/></g><rect x="648.85" y="230.00" width="1.7" height="1.4" fill="#2b313a"/><rect x="651.60" y="230.00" width="1.7" height="1.4" fill="#2b313a"/><rect x="654.35" y="230.00" width="1.7" height="1.4" fill="#2b313a"/><rect x="646.10" y="232.80" width="1.7" height="1.4" fill="#2b313a"/><rect x="648.85" y="232.80" width="1.7" height="1.4" fill="#2b313a"/><rect x="651.60" y="232.80" width="1.7" height="1.4" fill="#2b313a"/><rect x="654.35" y="232.80" width="1.7" height="1.4" fill="#2b313a"/><rect x="646.10" y="235.60" width="1.7" height="1.4" fill="#2b313a"/><rect x="648.85" y="235.60" width="1.7" height="1.4" fill="#2b313a"/><rect x="651.60" y="235.60" width="1.7" height="1.4" fill="#2b313a"/>
<g stroke="#5a6878" stroke-width="1.3" fill="none" stroke-linejoin="miter"><path d="M402.7,307.6 H417.3 V318.40000000000003 H411.8 L410,320.5 L408.2,318.40000000000003 H402.7 Z"/><path d="M405.6,310.8 H414.4 M405.6,313.1 H414.4 M405.6,315.40000000000003 H411.6" stroke="#5c6cd0" stroke-width="1.2"/></g>
<g stroke="#5a6878" stroke-width="1.3" fill="none" stroke-linejoin="miter"><path d="M402.7,343.6 H417.3 V354.40000000000003 H411.8 L410,356.5 L408.2,354.40000000000003 H402.7 Z"/><path d="M405.6,346.8 H414.4 M405.6,349.1 H414.4 M405.6,351.40000000000003 H411.6" stroke="#5c6cd0" stroke-width="1.2"/></g>
<g stroke="#5a6878" stroke-width="1.3" fill="none" stroke-linejoin="miter"><path d="M402.7,379.6 H417.3 V390.40000000000003 H411.8 L410,392.5 L408.2,390.40000000000003 H402.7 Z"/><path d="M405.6,382.8 H414.4 M405.6,385.1 H414.4 M405.6,387.40000000000003 H411.6" stroke="#5c6cd0" stroke-width="1.2"/></g>
<g stroke="#5a6878" stroke-width="1.3" fill="none" stroke-linejoin="miter"><path d="M402.7,415.6 H417.3 V426.40000000000003 H411.8 L410,428.5 L408.2,426.40000000000003 H402.7 Z"/><path d="M405.6,418.8 H414.4 M405.6,421.1 H414.4 M405.6,423.40000000000003 H411.6" stroke="#5c6cd0" stroke-width="1.2"/></g>
<g stroke="#5a6878" stroke-width="1.3" fill="none" stroke-linejoin="miter"><path d="M402.7,451.6 H417.3 V462.40000000000003 H411.8 L410,464.5 L408.2,462.40000000000003 H402.7 Z"/><path d="M405.6,454.8 H414.4 M405.6,457.1 H414.4 M405.6,459.40000000000003 H411.6" stroke="#5c6cd0" stroke-width="1.2"/></g>
<g stroke="#5a6878" stroke-width="1.3" fill="none" stroke-linejoin="miter"><path d="M402.7,487.6 H417.3 V498.40000000000003 H411.8 L410,500.5 L408.2,498.40000000000003 H402.7 Z"/><path d="M405.6,490.8 H414.4 M405.6,493.1 H414.4 M405.6,495.40000000000003 H411.6" stroke="#5c6cd0" stroke-width="1.2"/></g>
<g><path d="M733.50,316.80 L734.64,313.90 A4.8,4.8 0 1 1 736.40,315.66 Z" stroke="#31dca6" stroke-width="1.55" fill="#fff" stroke-linejoin="round"/><path d="M736.95,309.60 C736.80,312.00 738.90,313.80 741.10,313.40" stroke="#31dca6" stroke-width="1.75" fill="none" stroke-linecap="round"/></g>
<g><path d="M725.60,352.80 L726.74,349.90 A4.8,4.8 0 1 1 728.50,351.66 Z" stroke="#31dca6" stroke-width="1.55" fill="#fff" stroke-linejoin="round"/><path d="M729.05,345.60 C728.90,348.00 731.00,349.80 733.20,349.40" stroke="#31dca6" stroke-width="1.75" fill="none" stroke-linecap="round"/></g>
<g><path d="M733.50,388.80 L734.64,385.90 A4.8,4.8 0 1 1 736.40,387.66 Z" stroke="#31dca6" stroke-width="1.55" fill="#fff" stroke-linejoin="round"/><path d="M736.95,381.60 C736.80,384.00 738.90,385.80 741.10,385.40" stroke="#31dca6" stroke-width="1.75" fill="none" stroke-linecap="round"/></g>
<g><path d="M725.60,424.80 L726.74,421.90 A4.8,4.8 0 1 1 728.50,423.66 Z" stroke="#31dca6" stroke-width="1.55" fill="#fff" stroke-linejoin="round"/><path d="M729.05,417.60 C728.90,420.00 731.00,421.80 733.20,421.40" stroke="#31dca6" stroke-width="1.75" fill="none" stroke-linecap="round"/></g>
<g><path d="M725.60,460.80 L726.74,457.90 A4.8,4.8 0 1 1 728.50,459.66 Z" stroke="#31dca6" stroke-width="1.55" fill="#fff" stroke-linejoin="round"/><path d="M729.05,453.60 C728.90,456.00 731.00,457.80 733.20,457.40" stroke="#31dca6" stroke-width="1.75" fill="none" stroke-linecap="round"/></g>
<g><path d="M733.50,496.80 L734.64,493.90 A4.8,4.8 0 1 1 736.40,495.66 Z" stroke="#31dca6" stroke-width="1.55" fill="#fff" stroke-linejoin="round"/><path d="M736.95,489.60 C736.80,492.00 738.90,493.80 741.10,493.40" stroke="#31dca6" stroke-width="1.75" fill="none" stroke-linecap="round"/></g>
<path d="M380.4,679 V684 L377.4,681.5 Z" fill="#c3cad4"/><path d="M1321,679 V684 L1324,681.5 Z" fill="#c3cad4"/>
<g stroke="#4f46e5" stroke-width="1.1" fill="none" stroke-linecap="round" stroke-linejoin="round"><path d="M386,710.4 L380,716.8 L386,723.2 M391.4,710.4 L385.4,716.8 L391.4,723.2"/><path d="M416.8,710 L409.8,716.8 L416.8,723.6"/><path d="M591,710 L598,716.8 L591,723.6"/><path d="M616.8,710.4 L622.8,716.8 L616.8,723.2 M622.2,710.4 L628.2,716.8 L622.2,723.2"/></g>
<g stroke="#4a6070" stroke-width="1.25" fill="none" stroke-linecap="round" stroke-linejoin="round"><path d="M656.78,714.22 A7.2,7.2 0 0 1 670.12,712.93"/><path d="M670.55,719.22 A7.2,7.2 0 0 1 657.46,720.60"/><path d="M670.70,709.95 V713.65 H667.00"/><path d="M656.70,723.25 V719.55 H660.41"/></g>
<path d="M1314.2,715.6 l3.9,4.2 l3.9,-4.2" stroke="#2f3640" stroke-width="2" fill="none" stroke-linecap="butt" stroke-linejoin="miter"/>
</svg>
</body></html>
